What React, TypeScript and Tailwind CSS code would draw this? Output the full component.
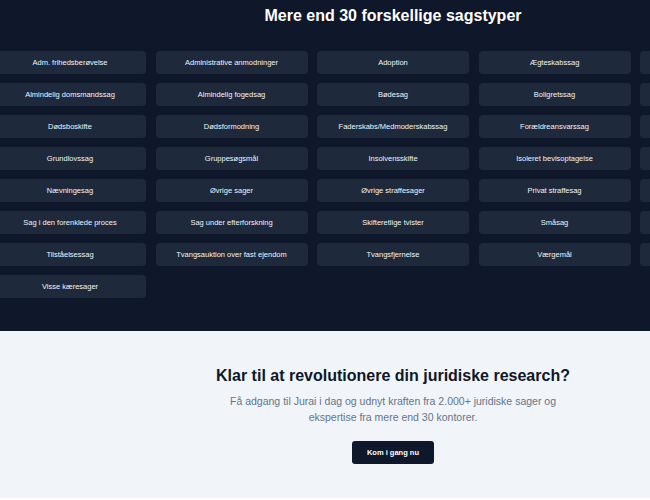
const caseTypes = [
  "Adm. frihedsberøvelse",
  "Administrative anmodninger",
  "Adoption",
  "Ægteskabssag",
  "",
  "Almindelig domsmandssag",
  "Almindelig fogedsag",
  "Bødesag",
  "Boligretssag",
  "",
  "Dødsboskifte",
  "Dødsformodning",
  "Faderskabs/Medmoderskabssag",
  "Forældreansvarssag",
  "",
  "Grundlovssag",
  "Gruppesøgsmål",
  "Insolvensskifte",
  "Isoleret bevisoptagelse",
  "",
  "Nævningesag",
  "Øvrige sager",
  "Øvrige straffesager",
  "Privat straffesag",
  "",
  "Sag i den forenklede proces",
  "Sag under efterforskning",
  "Skifteretlige tvister",
  "Småsag",
  "",
  "Tilståelsessag",
  "Tvangsauktion over fast ejendom",
  "Tvangsfjernelse",
  "Værgemål",
  "",
  "Visse kæresager",
];

export default function App() {
  return (
    <div className="w-full overflow-hidden bg-white font-['Liberation_Sans',Arial,sans-serif]">
      <div className="w-[786px]">
        {/* Case types */}
        <section className="bg-[#0f172a] pt-[6px] pb-[33px]">
          <h2 className="text-center text-[16px] leading-[20px] font-bold text-white mb-[25px]">
            Mere end 30 forskellige sagstyper
          </h2>
          <div className="-mx-[6px] grid grid-cols-5 gap-x-[9.5px] gap-y-[9px]">
            {caseTypes.map((c, i) => (
              <div
                key={i}
                className="h-[23px] rounded-[4px] bg-[#1e293b] flex items-center justify-center text-[7.5px] text-[#f1f5f9] whitespace-nowrap"
              >
                {c}
              </div>
            ))}
          </div>
        </section>

        {/* CTA */}
        <section className="bg-[#f1f5f9] pt-[35px] pb-[34px] flex flex-col items-center">
          <h2 className="text-[16px] leading-[20px] font-bold text-[#0f172a]">
            Klar til at revolutionere din juridiske research?
          </h2>
          <p className="mt-[7px] w-[340px] text-center text-[10.5px] leading-[16px] text-[#64748b]">
            Få adgang til Jurai i dag og udnyt kraften fra 2.000+ juridiske sager og ekspertise fra mere end 30 kontorer.
          </p>
          <button className="mt-[16px] w-[82px] h-[23px] rounded-[3px] bg-[#0f172a] text-white text-[7.5px] font-semibold">
            Kom i gang nu
          </button>
        </section>
      </div>
    </div>
  );
}
